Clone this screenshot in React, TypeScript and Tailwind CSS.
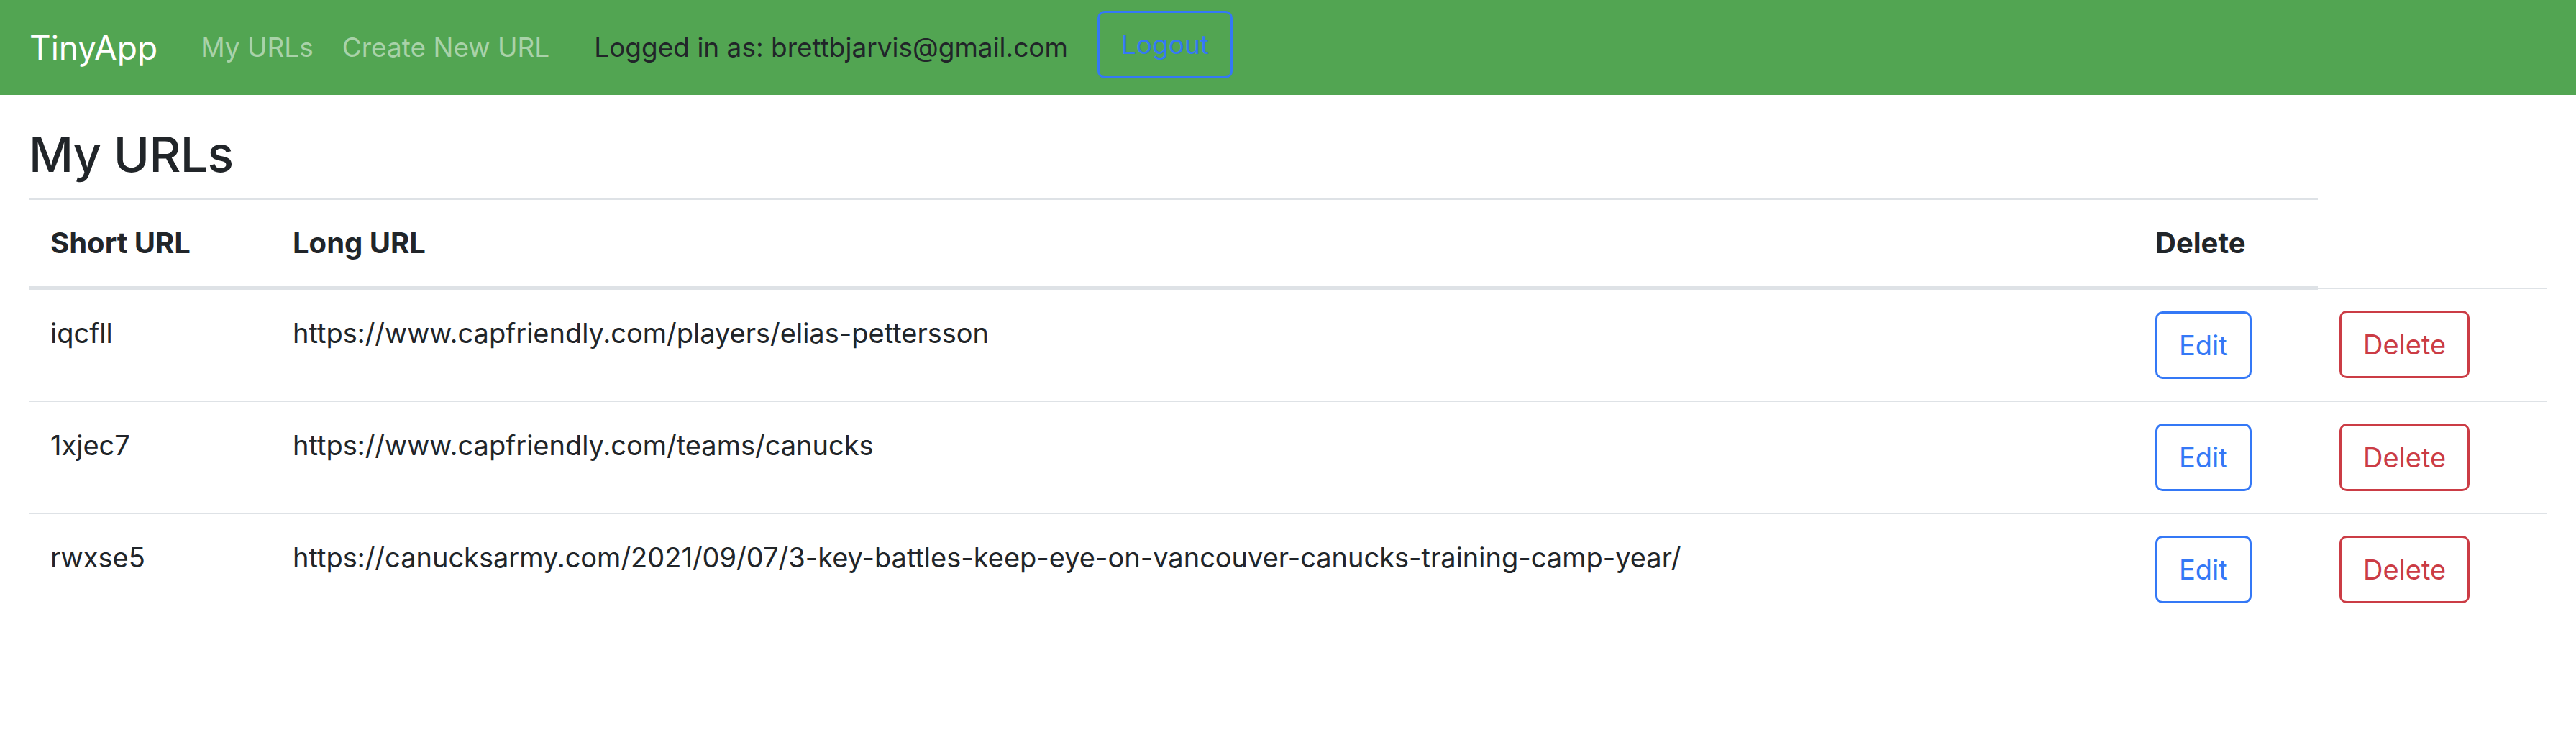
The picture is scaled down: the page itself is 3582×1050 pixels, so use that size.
const urls = [
  { id: "iqcfll", long: "https://www.capfriendly.com/players/elias-pettersson" },
  { id: "1xjec7", long: "https://www.capfriendly.com/teams/canucks" },
  {
    id: "rwxse5",
    long: "https://canucksarmy.com/2021/09/07/3-key-battles-keep-eye-on-vancouver-canucks-training-camp-year/",
  },
]

const Navbar = () => {
  return (
    <nav className="flex h-[132px] items-center bg-[#52a552] px-[41px]">
      <a className="mr-[40px] text-[46px] leading-[75px] text-white">TinyApp</a>
      <a className="px-[20px] text-[37px] leading-[60px] text-[#a9d2a9]">My URLs</a>
      <a className="px-[20px] text-[37px] leading-[60px] text-[#a9d2a9]">Create New URL</a>
      <span className="ml-[42px] text-[37px] leading-[60px] text-[#212529]">
        Logged in as: brettbjarvis@gmail.com
      </span>
      <button className="ml-[41px] -mt-[8px] h-[94px] rounded-[10px] border-[3px] border-[#3478f6] px-[30px] text-[37px] text-[#3478f6]">
        Logout
      </button>
    </nav>
  )
}

export default function App() {
  return (
    <div className="min-h-screen bg-white font-['Inter','Liberation_Sans',sans-serif] text-[#212529]">
      <Navbar />
      <main className="m-[40px]">
        <h3 className="mb-[20px] text-[68px] font-medium leading-[84px] tracking-[-0.01em]">My URLs</h3>
        <table className="w-full table-fixed border-collapse text-left text-[38px] leading-[60px]">
          <colgroup>
            <col className="w-[337px]" />
            <col className="w-[2590px]" />
            <col className="w-[256px]" />
            <col className="w-[319px]" />
          </colgroup>
          <thead>
            <tr>
              <th className="border-t-2 border-b-[5px] border-[#dee2e6] p-[30px] text-[40px] font-bold">Short URL</th>
              <th className="border-t-2 border-b-[5px] border-[#dee2e6] p-[30px] text-[40px] font-bold">Long URL</th>
              <th className="border-t-2 border-b-[5px] border-[#dee2e6] p-[30px] text-[40px] font-bold">Delete</th>
            </tr>
          </thead>
          <tbody>
            {urls.map((u) => (
              <tr key={u.id}>
                <td className="border-t-2 border-[#dee2e6] p-[30px] align-top">{u.id}</td>
                <td className="border-t-2 border-[#dee2e6] p-[30px] align-top">{u.long}</td>
                <td className="border-t-2 border-[#dee2e6] p-[30px] align-top">
                  <button className="h-[94px] rounded-[10px] border-[3px] border-[#3478f6] px-[30px] text-[#3478f6]">
                    Edit
                  </button>
                </td>
                <td className="border-t-2 border-[#dee2e6] p-[30px] align-top">
                  <button className="h-[94px] rounded-[10px] border-[3px] border-[#cb3c45] px-[30px] text-[#cb3c45]">
                    Delete
                  </button>
                </td>
              </tr>
            ))}
          </tbody>
        </table>
      </main>
    </div>
  )
}
